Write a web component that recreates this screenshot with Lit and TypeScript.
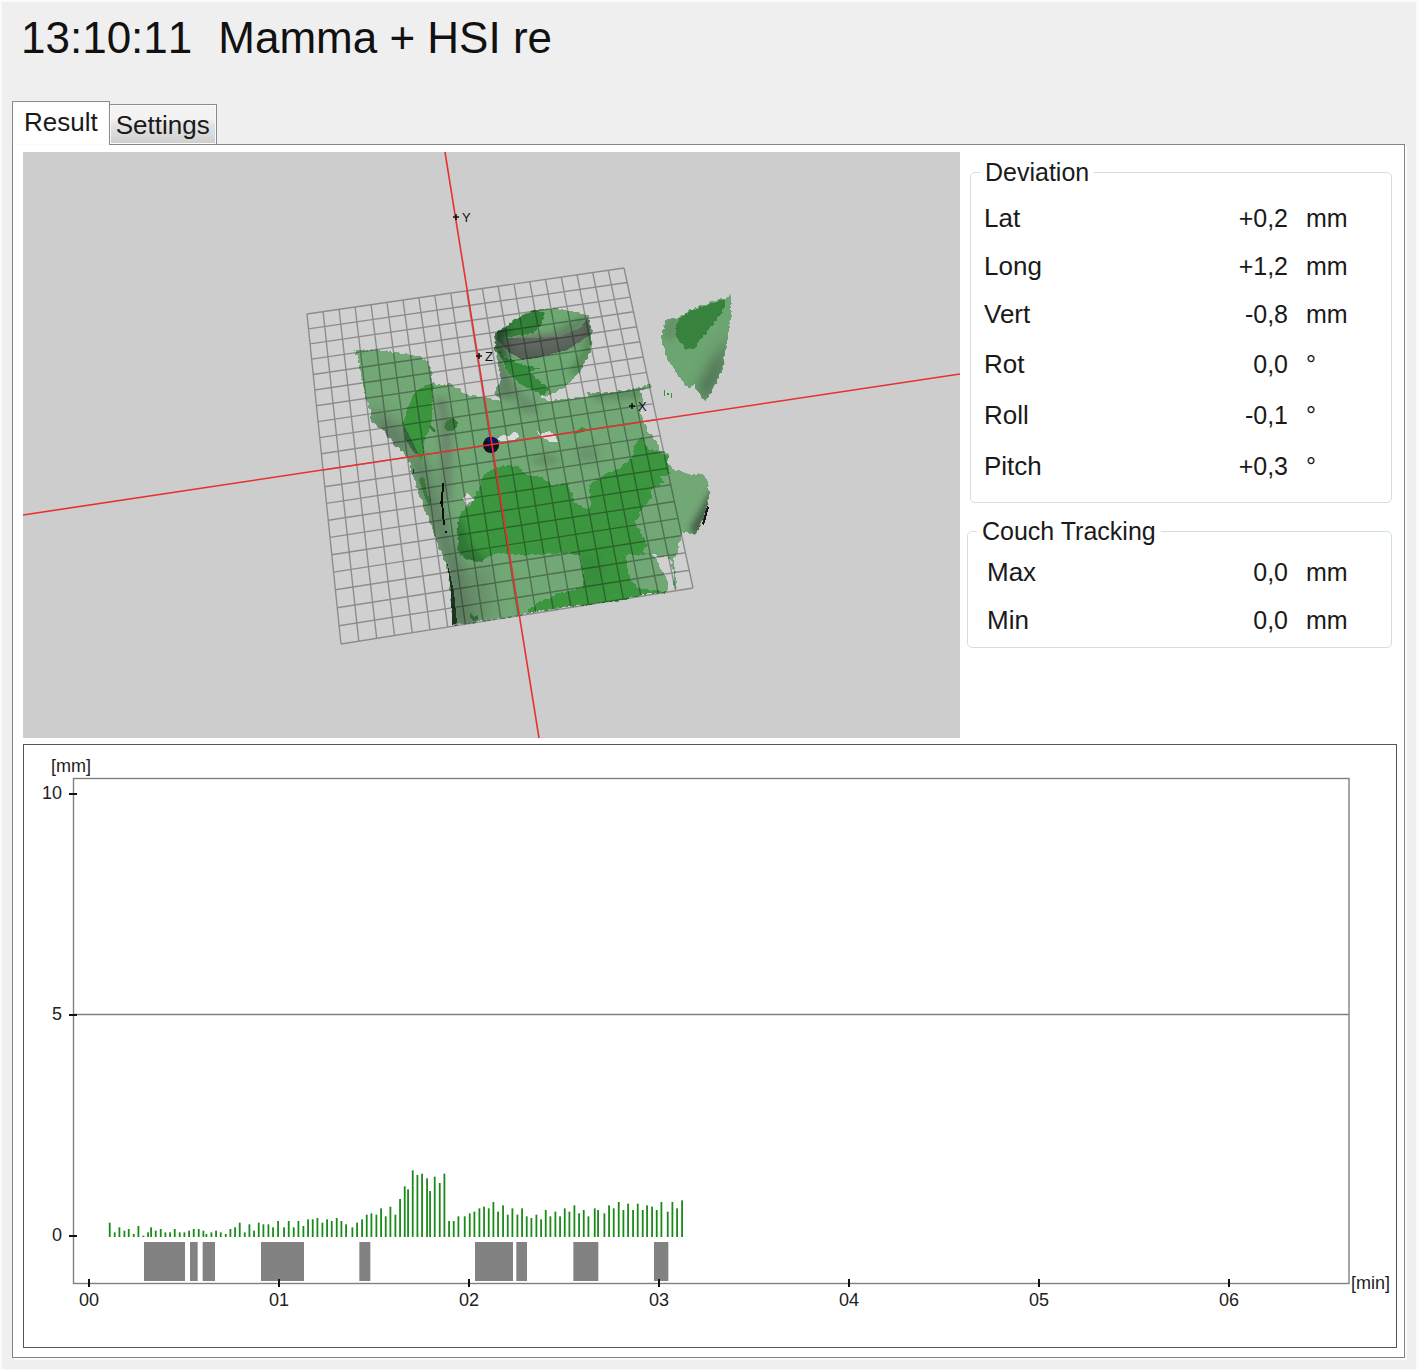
import { LitElement, html, svg, css } from "lit";
import { customElement, property, state } from "lit/decorators.js";

type Point = [number, number];

/** Turns a polygon into a path whose long edges have the stepped look of a scanned mesh. */
function ragged(points: Point[], amount = 1.3): string {
  const out: string[] = [];
  let seed = 7;
  points.forEach(([x1, y1], i) => {
    const [x2, y2] = points[(i + 1) % points.length];
    const length = Math.hypot(x2 - x1, y2 - y1);
    const steps = Math.max(1, Math.round(length / 2));
    for (let s = 0; s < steps; s++) {
      seed = (seed * 16807) % 2147483647;
      const jitter = ((seed % 1000) / 1000 - 0.5) * 2 * amount;
      const t = s / steps;
      const nx = -(y2 - y1) / (length || 1);
      const ny = (x2 - x1) / (length || 1);
      out.push(
        `${(x1 + (x2 - x1) * t + nx * jitter).toFixed(1)} ${(y1 + (y2 - y1) * t + ny * jitter).toFixed(1)}`
      );
    }
  });
  return `M${out.join("L")}Z`;
}

/** Lines of a square floor grid seen in perspective, from its four projected corners. */
function gridPath(tl: Point, tr: Point, br: Point, bl: Point, cells: number): string {
  const dx1 = tr[0] - br[0];
  const dx2 = bl[0] - br[0];
  const dy1 = tr[1] - br[1];
  const dy2 = bl[1] - br[1];
  const sx = tl[0] - tr[0] + br[0] - bl[0];
  const sy = tl[1] - tr[1] + br[1] - bl[1];
  const det = dx1 * dy2 - dx2 * dy1;
  const g = (sx * dy2 - dx2 * sy) / det;
  const h = (dx1 * sy - sx * dy1) / det;
  const at = (u: number, v: number) => {
    const w = g * u + h * v + 1;
    const x = ((tr[0] - tl[0] + g * tr[0]) * u + (bl[0] - tl[0] + h * bl[0]) * v + tl[0]) / w;
    const y = ((tr[1] - tl[1] + g * tr[1]) * u + (bl[1] - tl[1] + h * bl[1]) * v + tl[1]) / w;
    return `${x.toFixed(1)} ${y.toFixed(1)}`;
  };
  let d = "";
  for (let i = 0; i <= cells; i++) {
    const k = i / cells;
    d += `M${at(k, 0)}L${at(k, 1)}M${at(0, k)}L${at(1, k)}`;
  }
  return d;
}

const GRID = gridPath([307, 314], [624, 268], [693, 588], [341, 644], 20);

const TORSO = ragged([
  [354, 350], [377, 350], [400, 353], [417, 355], [428, 362], [431, 370], [433, 384], [452, 384],
  [467, 395], [485, 397], [502, 401], [494, 393], [501, 380], [498, 360], [495, 350], [520, 350],
  [548, 392], [541, 397], [548, 401], [560, 399], [587, 397], [587, 393], [607, 393], [637, 388],
  [650, 384], [652, 386], [640, 390], [643, 398], [640, 413], [647, 430], [657, 442], [660, 450],
  [668, 453], [667, 462], [672, 469], [682, 472], [692, 475], [702, 473], [707, 482], [710, 493],
  [707, 510], [700, 528], [695, 534], [682, 532], [677, 553], [674, 558], [675, 570], [677, 588],
  [674, 588], [672, 563], [668, 557], [660, 557], [652, 554], [658, 563], [667, 580], [668, 588],
  [665, 593], [643, 594], [622, 600], [607, 602], [567, 607], [530, 613], [500, 619], [477, 622],
  [453, 625], [450, 590], [449, 573], [443, 557], [430, 523], [413, 477], [408, 457], [395, 445],
  [383, 430], [372, 422], [370, 410], [363, 387], [358, 360],
]);

const CHEST = ragged([
  [487, 472], [500, 466], [517, 466], [527, 475], [543, 477], [553, 487], [567, 483], [572, 493],
  [575, 502], [582, 507], [591, 508], [589, 485], [603, 475], [617, 470], [633, 457], [634, 447],
  [642, 436], [647, 448], [668, 455], [667, 465], [671, 473], [660, 478], [666, 482], [650, 490],
  [653, 497], [643, 508], [635, 522], [647, 545], [643, 551], [650, 555], [625, 555], [627, 570],
  [632, 583], [643, 590], [665, 591], [665, 593], [643, 594], [622, 600], [607, 602], [567, 607],
  [530, 613], [528, 610], [540, 602], [560, 593], [583, 587], [583, 573], [580, 557], [572, 553],
  [525, 555], [500, 553], [493, 555], [480, 562], [467, 560], [458, 552], [457, 527], [460, 513],
  [473, 502], [478, 490], [482, 478],
]);

const SHOULDER = ragged([
  [417, 390], [433, 382], [432, 407], [432, 423], [424, 440], [422, 463], [416, 453], [407, 440],
  [403, 423], [408, 405],
]);

const HEAD = ragged([
  [495, 333], [505, 327], [517, 318], [533, 310], [552, 308], [570, 311], [588, 315], [592, 330],
  [591, 350], [580, 373], [563, 388], [548, 396], [540, 395], [520, 385], [508, 373], [495, 350],
]);

const HEAD_TOP = ragged([
  [495, 333], [517, 318], [535, 310], [545, 313], [543, 322], [533, 333], [510, 337], [500, 342],
]);

const HEAD_BAND = ragged(
  [
    [496, 338], [530, 338], [560, 337], [580, 328], [588, 318], [592, 320], [590, 335], [567, 350],
    [540, 357], [523, 360], [510, 353],
  ],
  0.5
);

const HEAD_SIDE = ragged([
  [495, 345], [505, 357], [523, 365], [540, 368], [530, 373], [548, 388], [545, 396], [520, 385],
  [508, 373],
]);

const ARM = ragged([
  [731, 294], [731, 315], [728, 337], [723, 367], [715, 385], [706, 402], [698, 393], [695, 385],
  [688, 388], [677, 375], [667, 358], [661, 338], [666, 320], [680, 317], [690, 310], [710, 302],
  [727, 298],
]);

const ARM_PATCH = ragged([
  [675, 328], [680, 317], [693, 310], [727, 298], [722, 312], [710, 328], [693, 350], [685, 348],
  [677, 338],
]);

@customElement("scan-view")
export class ScanView extends LitElement {
  static styles = css`
    :host {
      display: block;
      background: #cdcdcd;
    }
    svg {
      display: block;
      width: 100%;
    }
    .mesh {
      shape-rendering: crispEdges;
    }
    .grid {
      fill: none;
      stroke: #000;
      stroke-opacity: 0.32;
      stroke-width: 1.4;
    }
    .axis {
      stroke: #e83030;
      stroke-width: 1.6;
    }
    .mark {
      stroke: #111;
      stroke-width: 1.6;
    }
    text {
      font: 13px "Liberation Sans", Arial, sans-serif;
      fill: #111;
    }
  `;

  private marker(x: number, y: number, name: string) {
    return svg`
      <path class="mark" d="M${x - 3} ${y}h6M${x} ${y - 3}v6" />
      <text x=${x + 6} y=${y + 5}>${name}</text>
    `;
  }

  render() {
    return html`
      <svg viewBox="23 152 937 586" role="img" aria-label="Surface scan">
        <defs>
          <filter id="soft" x="-50%" y="-50%" width="200%" height="200%">
            <feGaussianBlur stdDeviation="7" />
          </filter>
          <filter id="softer" x="-50%" y="-50%" width="200%" height="200%">
            <feGaussianBlur stdDeviation="3" />
          </filter>
          <clipPath id="torso"><path d=${TORSO} /></clipPath>
          <clipPath id="chest"><path d=${CHEST} /></clipPath>
          <clipPath id="head"><path d=${HEAD} /></clipPath>
          <clipPath id="arm"><path d=${ARM} /></clipPath>
        </defs>

        <path d="M307 314L624 268L693 588L341 644Z" fill="#fff" opacity="0.08" />

        <g class="mesh">
          <path d=${TORSO} fill="#72a776" />
          <g clip-path="url(#torso)">
            <path d="M408 450L430 515L448 570L452 628L474 628L462 570L448 530L424 460Z" fill="#566858" opacity="0.8" filter="url(#soft)" />
            <path d="M436 398L446 398L452 430L452 500L442 500L440 430Z" fill="#667b68" opacity="0.7" filter="url(#softer)" />
            <path d="M368 405L405 430L412 460L380 440Z" fill="#5f7862" opacity="0.9" filter="url(#soft)" />
            <path d="M494 345L508 368L516 392L512 400L498 398Z" fill="#5d7a60" opacity="0.8" filter="url(#softer)" />
            <path d="M510 385L535 402L540 414L520 412Z" fill="#5f8262" opacity="0.6" filter="url(#softer)" />
            <path d="M590 392L642 388L640 398L595 400Z" fill="#548558" opacity="0.7" filter="url(#softer)" />
            <path d="M714 485L712 510L696 540L690 528L703 505Z" fill="#3f5a44" opacity="0.9" filter="url(#softer)" />
            <ellipse cx="545" cy="460" rx="14" ry="6" fill="#5f875f" opacity="0.6" filter="url(#softer)" />
            <ellipse cx="588" cy="454" rx="11" ry="8" fill="#638b63" opacity="0.6" filter="url(#softer)" />
            <path d="M455 570L490 565L495 622L455 624Z" fill="#5f7f61" opacity="0.5" filter="url(#soft)" />
          </g>
          <path d=${SHOULDER} fill="#3a953d" />
          <path d="M404 425l6 12 9 18-5-2-9-14z" fill="#33523a" opacity="0.7" />
          <path d=${CHEST} fill="#3c963f" />
          <g clip-path="url(#chest)">
            <path d="M453 515L462 522L470 546L488 560L470 570L450 560Z" fill="#2f6f35" opacity="0.8" filter="url(#softer)" />
            <path d="M575 555L600 555L605 580L585 590Z" fill="#338338" opacity="0.5" filter="url(#soft)" />
          </g>
          <path d="M446 421l4-2 3-1 3 2 2 3-2 5-4 3-5 0-3-3z" fill="#38783b" />
          <path d="M422 476l3 4 2 14 4 6-2 6-4-8-3-10-3-8z" fill="#3b783e" />
          <path d="M430 424l3 4 3 3-3 1-4-4z" fill="#3b783e" />
          <path d="M575 431l4-1 2-3 4 1 0 3-6 2-4 1z" fill="#399439" />
          <path d="M470 613l4 4 4-2 0 5-4 1-4-3z" fill="#35693a" />

          <path d="M499 437l4-2 6 1 4-4 5 1 1 4-5 3-12 1-4-1zM537 431l4 3 8-3 6 4 3 7-8 0-4-3-5-1z" fill="#dcdcdc" />
          <path d="M462 499l4-3 1-3 3 3 5 4-7 3-2 3-2-5z" fill="#dcd6dc" />

          <path d="M442 483h2l-1 18 1 14 1 10-2 0-2-24z" fill="#0c100c" />
          <path d="M445 531h2v2h-2zM440 501h3v3h-3z" fill="#0c100c" />
          <path d="M413 469h1v4h-1zM447 562l3 12 4 18 3 31-5 2-1-35z" fill="#1b3420" />
          <path d="M707 506l2 1-5 18-2-1z" fill="#121a14" />
          <path d="M664 390h1v6h-1zM667 393h2v2h-2zM671 393h1v5h-1z" fill="#389439" />

          <path d=${HEAD} fill="#6ea872" />
          <g clip-path="url(#head)">
            <path d="M588 325L595 330L592 352L575 378L570 370L583 350Z" fill="#4c8050" opacity="0.7" filter="url(#softer)" />
            <path d=${HEAD_BAND} fill="#566058" />
            <path d="M510 338L588 330L578 342L540 350L520 350Z" fill="#636964" opacity="0.8" filter="url(#softer)" />
            <path d="M555 330L588 314L584 326L565 335Z" fill="#5c7a5f" opacity="0.8" filter="url(#softer)" />
            <path d=${HEAD_TOP} fill="#33803a" />
            <path d=${HEAD_SIDE} fill="#358b3b" />
            <path d="M493 330L510 328L502 342L510 358L504 360L494 350Z" fill="#1c2f20" opacity="0.7" filter="url(#softer)" />
          </g>

          <path d=${ARM} fill="#6da572" />
          <g clip-path="url(#arm)">
            <path d="M732 335L722 370L706 405L698 388L714 360Z" fill="#47604b" opacity="0.85" filter="url(#soft)" />
            <path d="M661 338L668 318L682 316L674 340Z" fill="#5f8764" opacity="0.6" filter="url(#softer)" />
          </g>
          <path d=${ARM_PATCH} fill="#37823d" />
        </g>

        <path class="grid" d=${GRID} />

        <circle cx="491" cy="445" r="8" fill="#101410" />
        <path d="M490 444V437a8 8 0 0 0-5 2zM492 444h7a8 8 0 0 0-7-7zM492 446v7l5-3zM490 446h-4l4 5z" fill="#10106a" />
        <line class="axis" x1="445" y1="152" x2="539" y2="738" />
        <line class="axis" x1="23" y1="515" x2="960" y2="374" />

        ${this.marker(456, 217, "Y")} ${this.marker(479, 356, "Z")} ${this.marker(632, 406, "X")}
      </svg>
    `;
  }
}

/* Samples as [time, deviation]: 570 time units to the minute, 133 deviation units to the mm. */
const TIME_UNIT = 570 / 190;
const FIRST = 207;
const SAMPLES: Point[] = [
  [268, 43], [283, 14], [297, 29], [312, 19], [325, 24], [340, 9], [354, 33], [369, 4], [383, 14],
  [392, 29], [406, 19], [421, 24], [435, 14], [449, 14], [463, 24], [478, 14], [492, 14], [506, 19],
  [520, 24], [535, 24], [549, 19], [558, 9], [573, 14], [587, 19], [601, 14], [616, 9], [630, 24],
  [644, 29], [658, 43], [673, 14], [687, 38], [701, 19], [715, 43], [729, 38], [744, 38], [758, 29],
  [773, 48], [791, 29], [805, 48], [820, 29], [834, 48], [849, 33], [863, 53], [877, 53], [891, 57],
  [906, 43], [920, 53], [934, 48], [949, 57], [963, 48], [977, 38], [996, 29], [1010, 43],
  [1025, 53], [1039, 67], [1053, 71], [1068, 67], [1082, 86], [1096, 62], [1110, 91], [1125, 67],
  [1139, 114], [1153, 152], [1163, 143], [1177, 200], [1191, 186], [1205, 190], [1220, 176],
  [1229, 138], [1243, 181], [1258, 162], [1272, 190], [1286, 48], [1300, 48], [1314, 62],
  [1333, 62], [1348, 71], [1362, 76], [1377, 86], [1391, 91], [1405, 86], [1419, 105], [1433, 76],
  [1448, 95], [1462, 67], [1476, 86], [1491, 67], [1505, 86], [1519, 62], [1533, 57], [1548, 67],
  [1562, 53], [1576, 81], [1590, 62], [1605, 76], [1619, 62], [1633, 86], [1647, 76], [1662, 95],
  [1676, 71], [1690, 81], [1704, 62], [1723, 86], [1733, 81], [1752, 71], [1766, 95], [1780, 86],
  [1795, 105], [1809, 81], [1823, 100], [1838, 81], [1852, 100], [1867, 81], [1880, 95], [1895, 91],
  [1909, 81], [1923, 105], [1942, 76], [1956, 105], [1970, 86], [1985, 110],
];

/* Beam-on spans, in the same time units. */
const SPANS: Point[] = [
  [372, 495], [510, 533], [548, 585], [723, 852], [1018, 1051], [1365, 1479], [1489, 1521],
  [1660, 1735], [1902, 1945],
];

const timeX = (t: number) => 89 + (t - FIRST) / TIME_UNIT;

@customElement("deviation-chart")
export class DeviationChart extends LitElement {
  static styles = css`
    :host {
      display: block;
      border: 1px solid #555;
      background: #fff;
    }
    svg {
      display: block;
      width: 100%;
    }
    .frame {
      fill: none;
      stroke: #808080;
      stroke-width: 1.4;
    }
    .tick {
      stroke: #111;
      stroke-width: 2;
    }
    .bar {
      fill: #1a8a1a;
    }
    .span {
      fill: #828282;
    }
    text {
      font: 18px "Liberation Sans", Arial, sans-serif;
      fill: #222;
    }
    .end {
      text-anchor: end;
    }
    .middle {
      text-anchor: middle;
    }
  `;

  render() {
    const zero = 1236;
    const minutes = ["00", "01", "02", "03", "04", "05", "06"];
    const levels: [string, number][] = [["10", 794], ["5", 1015], ["0", 1236]];
    return html`
      <svg viewBox="24 745 1372 602" role="img" aria-label="Deviation over time">
        ${SPANS.map(
          ([a, b]) => svg`<rect class="span" x=${timeX(a)} y="1242" width=${(b - a) / TIME_UNIT} height="39" />`
        )}
        ${SAMPLES.map(
          ([t, v]) =>
            svg`<rect class="bar" x=${timeX(t) - 0.5} y=${zero + 1 - v / TIME_UNIT} width="1.8" height=${v / TIME_UNIT} />`
        )}
        <rect class="frame" x="73.5" y="778.5" width="1275.5" height="505" />
        <line class="frame" x1="73" y1="1014.5" x2="1349" y2="1014.5" />
        ${levels.map(
          ([name, y]) => svg`
            <line class="tick" x1="69" y1=${y} x2="77" y2=${y} />
            <text class="end" x="62" y=${y + 5}>${name}</text>`
        )}
        ${minutes.map(
          (name, i) => svg`
            <line class="tick" x1=${89 + i * 190} y1="1279" x2=${89 + i * 190} y2="1287" />
            <text class="middle" x=${89 + i * 190} y="1306">${name}</text>`
        )}
        <text x="51" y="772">[mm]</text>
        <text x="1351" y="1289">[min]</text>
      </svg>
    `;
  }
}

interface Reading {
  name: string;
  value: string;
  unit: string;
}

@customElement("reading-group")
export class ReadingGroup extends LitElement {
  static styles = css`
    :host {
      display: block;
      font: 25px/28px "Liberation Sans", Arial, sans-serif;
      color: #1a1a1a;
    }
    .group {
      margin: 0;
      padding: 8px 0 11px;
      min-width: 0;
      border: 1px solid #cfdfe6;
      border-radius: 5px;
    }
    .legend {
      margin-left: 9px;
      padding: 0 5px;
    }
    .readings {
      width: 100%;
      border-collapse: collapse;
    }
    .row {
      height: 48px;
    }
    .row.angle {
      height: 51px;
    }
    .name,
    .value,
    .unit {
      padding: 0;
      font-size: 25px;
      font-weight: normal;
      text-align: left;
    }
    .name {
      padding-left: 13px;
      font-size: 26px;
    }
    .value {
      text-align: right;
    }
    .unit {
      width: 85px;
      padding-left: 18px;
    }
    :host([compact]) .group {
      padding: 3px 0;
    }
    :host([compact]) .name {
      padding-left: 19px;
    }
  `;

  @property() label = "";
  @property({ attribute: false }) readings: Reading[] = [];

  render() {
    return html`
      <fieldset class="group">
        <legend class="legend">${this.label}</legend>
        <table class="readings">
          <tbody>
            ${this.readings.map(
              (r) => html`
                <tr class=${r.unit === "°" ? "row angle" : "row"}>
                  <th class="name" scope="row">${r.name}</th>
                  <td class="value">${r.value}</td>
                  <td class="unit">${r.unit}</td>
                </tr>
              `
            )}
          </tbody>
        </table>
      </fieldset>
    `;
  }
}

@customElement("app-root")
export class AppRoot extends LitElement {
  static styles = css`
    :host {
      display: block;
      box-sizing: border-box;
      min-height: 100vh;
      padding: 11px 11px 11px 10px;
      border: 2px solid #fafafa;
      background: #efefef;
      font-family: "Liberation Sans", Arial, sans-serif;
      color: #111;
    }
    .title {
      display: flex;
      gap: 26px;
      margin: 0 0 38px;
      padding-left: 9px;
      font-size: 44px;
      line-height: 50px;
      font-weight: normal;
      font-kerning: none;
    }
    .tabs {
      display: flex;
      align-items: flex-end;
    }
    .tab {
      height: 40px;
      margin: 0 0 0 -1px;
      padding: 0 6px;
      border: 1px solid #868b94;
      border-bottom: 0;
      background: linear-gradient(#f3f3f3 0 35%, #e4e4e4 50%, #cfcfcf);
      box-shadow: inset 0 0 0 1px #fafafa;
      color: #1a1a1a;
      font: 26px/30px "Liberation Sans", Arial, sans-serif;
    }
    .tab[aria-selected="true"] {
      z-index: 1;
      height: 44px;
      margin: 0 0 -1px;
      padding: 0 11px 3px;
      background: #fff;
    }
    .panel {
      display: grid;
      grid-template-columns: 937fr 437fr;
      gap: 6px 0;
      padding: 7px 7px 9px 10px;
      border: 1px solid #7f848d;
      background: #fff;
      box-shadow: 2px 2px 0 #fafafa;
    }
    .side {
      display: flex;
      flex-direction: column;
      gap: 14px;
      padding: 6px 5px 0 7px;
    }
    .deviation {
      margin-left: 3px;
    }
    .chart {
      grid-column: 1 / -1;
    }
  `;

  @state() private tab = "Result";

  private deviation: Reading[] = [
    { name: "Lat", value: "+0,2", unit: "mm" },
    { name: "Long", value: "+1,2", unit: "mm" },
    { name: "Vert", value: "-0,8", unit: "mm" },
    { name: "Rot", value: "0,0", unit: "°" },
    { name: "Roll", value: "-0,1", unit: "°" },
    { name: "Pitch", value: "+0,3", unit: "°" },
  ];

  private couch: Reading[] = [
    { name: "Max", value: "0,0", unit: "mm" },
    { name: "Min", value: "0,0", unit: "mm" },
  ];

  render() {
    return html`
      <h1 class="title"><span>13:10:11</span><span>Mamma + HSI re</span></h1>
      <div class="tabs" role="tablist">
        ${["Result", "Settings"].map(
          (name) => html`
            <button
              class="tab"
              role="tab"
              aria-selected=${this.tab === name ? "true" : "false"}
              @click=${() => (this.tab = name)}
            >
              ${name}
            </button>
          `
        )}
      </div>
      <main class="panel" role="tabpanel">
        ${this.tab === "Result"
          ? html`
              <scan-view></scan-view>
              <div class="side">
                <reading-group class="deviation" label="Deviation" .readings=${this.deviation}></reading-group>
                <reading-group compact label="Couch Tracking" .readings=${this.couch}></reading-group>
              </div>
              <deviation-chart class="chart"></deviation-chart>
            `
          : null}
      </main>
    `;
  }
}
